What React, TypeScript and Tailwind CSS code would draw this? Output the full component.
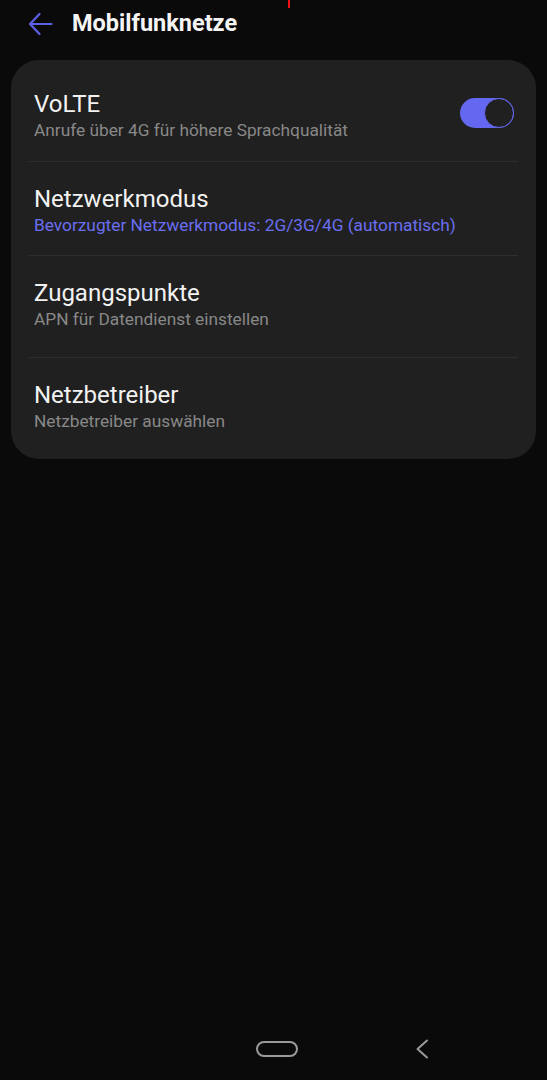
import React from 'react';

const font = { fontFamily: 'Roboto, "Noto Sans", sans-serif' };

interface RowProps {
  title: string;
  subtitle: string;
  accent?: boolean;
  className: string;
  toggle?: boolean;
}

const Toggle: React.FC = () => (
  <div className="relative mb-[5px] h-[30px] w-[54px] rounded-full bg-[#6468f0]">
    <div className="absolute right-0 top-0 h-[30px] w-[30px] rounded-full border-[1.5px] border-[#6468f0] bg-[#202020]" />
  </div>
);

const Row: React.FC<RowProps> = ({ title, subtitle, accent, className, toggle }) => (
  <div className={`flex items-center justify-between px-[23px] ${className}`}>
    <div className="flex flex-col">
      <span className="text-[24px] leading-[28px] text-[#f2f2f2]">{title}</span>
      <span
        className={`mt-[1px] text-[17.3px] leading-[22px] ${accent ? 'text-[#6a6ef0]' : 'text-[#888888]'}`}
      >
        {subtitle}
      </span>
    </div>
    {toggle && <Toggle />}
  </div>
);

const Divider = () => <div className="mx-[18px] h-px bg-[#2e2e2e]" />;

export default function App() {
  return (
    <div className="relative flex h-[1080px] w-[547px] flex-col bg-[#0a0a0a]" style={font}>
      <div className="absolute left-[288px] top-0 h-[8px] w-[2px] bg-[#ee1111]" />

      <header className="flex h-[47px] items-center pl-[28px] pt-[1px]">
        <svg width="25" height="24" viewBox="0 0 25 24" fill="none" stroke="#5b60e6" strokeWidth="2.2" strokeLinecap="round" strokeLinejoin="round">
          <path d="M23.5 12H2.5M11.5 2L2 12l9.5 10" />
        </svg>
        <h1 className="ml-[19px] text-[23.5px] font-bold text-[#f5f5f5]">Mobilfunknetze</h1>
      </header>

      <div className="mx-[11px] mt-[13px] rounded-[28px] bg-[#202020]">
        <Row
          title="VoLTE"
          subtitle="Anrufe über 4G für höhere Sprachqualität"
          className="pl-[23px] pr-[22px] pt-[30px] pb-[20px]"
          toggle
        />
        <Divider />
        <Row
          title="Netzwerkmodus"
          subtitle="Bevorzugter Netzwerkmodus: 2G/3G/4G (automatisch)"
          accent
          className="pt-[23px] pb-[19px]"
        />
        <Divider />
        <Row title="Zugangspunkte" subtitle="APN für Datendienst einstellen" className="pt-[23px] pb-[27px]" />
        <Divider />
        <Row title="Netzbetreiber" subtitle="Netzbetreiber auswählen" className="pt-[23px] pb-[27px]" />
      </div>

      <div className="flex-1" />

      <nav className="flex h-[58px] items-start pl-[256px] pt-[19px]">
        <div className="h-[16px] w-[42px] rounded-full border-2 border-[#9a9a9a]" />
        <svg className="ml-[117px] mt-[-2px]" width="14" height="20" viewBox="0 0 14 20" fill="none" stroke="#9a9a9a" strokeWidth="2" strokeLinecap="round" strokeLinejoin="round">
          <path d="M12 1.5L2.5 10l9.5 8.5" />
        </svg>
      </nav>
    </div>
  );
}
